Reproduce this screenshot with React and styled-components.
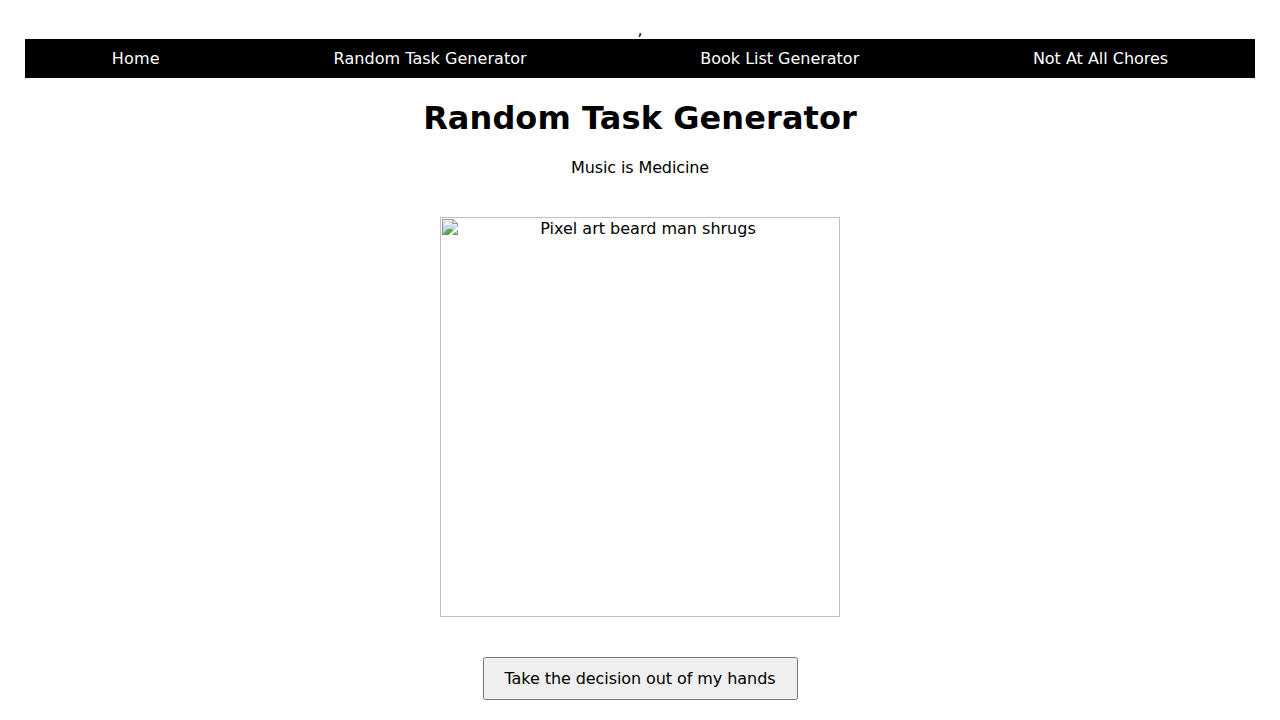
import React from "react";
import styled, { createGlobalStyle } from "styled-components";

const GlobalStyle = createGlobalStyle`
  body {
    margin: 0;
    padding: 20px 25px 0;
    background: #fff;
    color: #000;
    font-family: "DejaVu Sans", sans-serif;
    font-size: 16px;
    line-height: 19px;
    text-align: center;
    overflow: hidden;
  }
`;

const NavBar = styled.nav`
  display: flex;
  justify-content: space-around;
  padding: 10px 0;
  background: #000;
`;

const NavLink = styled.a`
  color: #fff;
  text-decoration: none;
  letter-spacing: ${({ $tracking }) => $tracking};
`;

const Title = styled.h1`
  margin: 21px 0;
  font-size: 32px;
  line-height: 38px;
  letter-spacing: 0.08px;
`;

const Task = styled.p`
  margin: 0 0 40px;
  letter-spacing: -0.11px;
`;

const Picture = styled.img`
  display: block;
  box-sizing: border-box;
  width: 400px;
  height: 400px;
  margin: 0 auto 40px;
  padding: 1px;
  border: 1px solid silver;
`;

const DecideButton = styled.button`
  width: 315px;
  padding: 10px 0;
  font: inherit;
  letter-spacing: -0.075px;
`;

const links = [
  { label: "Home", tracking: "0.2px" },
  { label: "Random Task Generator", tracking: "0.04px" },
  { label: "Book List Generator", tracking: "-0.02px" },
  { label: "Not At All Chores", tracking: "-0.02px" },
];

export default function App() {
  return (
    <>
      <GlobalStyle />
      ,
      <NavBar>
        {links.map(({ label, tracking }) => (
          <NavLink key={label} href="#" $tracking={tracking}>{label}</NavLink>
        ))}
      </NavBar>
      <Title>Random Task Generator</Title>
      <Task>Music is Medicine</Task>
      <Picture src="shrug.png" alt="Pixel art beard man shrugs" />
      <DecideButton>Take the decision out of my hands</DecideButton>
    </>
  );
}
